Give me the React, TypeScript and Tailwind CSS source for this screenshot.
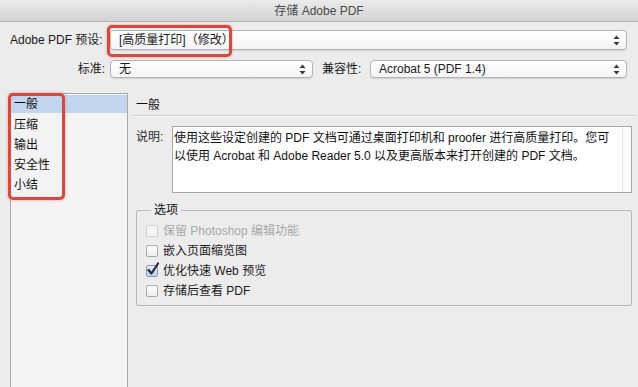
import React from "react";

const font = { fontFamily: '"Liberation Sans", "Noto Sans CJK SC", sans-serif' };

function Arrows() {
  return (
    <svg width="7" height="11" viewBox="0 0 7 11" className="shrink-0">
      <path d="M3.5 0.5 L6.5 4 L0.5 4 Z" fill="#3a3a3a" />
      <path d="M3.5 10.5 L6.5 7 L0.5 7 Z" fill="#3a3a3a" />
    </svg>
  );
}

function Select({ value, className }: { value: string; className: string }) {
  return (
    <div
      className={
        "flex items-center justify-between rounded-[4px] border border-[#b4b4b4] bg-gradient-to-b from-[#ffffff] to-[#f4f4f4] pl-[8px] pr-[6px] text-[12px] text-[#1b1b1b] shadow-[0_1px_1px_rgba(0,0,0,0.12)] " +
        className
      }
    >
      <span className="leading-none">{value}</span>
      <Arrows />
    </div>
  );
}

function Check({ label, checked, disabled }: { label: string; checked?: boolean; disabled?: boolean }) {
  return (
    <div className="flex h-[20px] items-center">
      <div
        className={
          "relative h-[12px] w-[12px] rounded-[2px] border " +
          (disabled
            ? "border-[#d0d0d0] bg-[#f6f6f6]"
            : checked
            ? "border-[#8b9bb5] bg-gradient-to-b from-[#e8f0fb] to-[#bcd0ea]"
            : "border-[#a8a8a8] bg-gradient-to-b from-[#ffffff] to-[#ececec]")
        }
      >
        {checked && (
          <svg width="14" height="14" viewBox="0 0 14 14" className="absolute left-[-1px] top-[-4px]">
            <path d="M2.5 8 L5.5 11.5 L12 1.5" fill="none" stroke="#1f2a44" strokeWidth="2.2" strokeLinecap="round" strokeLinejoin="round" />
          </svg>
        )}
      </div>
      <span className={"ml-[5px] text-[12px] " + (disabled ? "text-[#a8a8a8]" : "text-[#1b1b1b]")}>{label}</span>
    </div>
  );
}

export default function App() {
  return (
    <div className="relative h-[387px] w-[638px] overflow-hidden bg-[#ececec]" style={font}>
      {/* title bar */}
      <div className="flex h-[22px] items-center justify-center border-b border-[#b3b3b3] bg-gradient-to-b from-[#ebebeb] to-[#d3d3d3] text-[12px] text-[#4a4a4a]">
        存储 Adobe PDF
      </div>

      {/* form rows */}
      <div className="mt-[8px] flex h-[20px] items-center">
        <div className="w-[104px] pl-[10px] text-[12px] text-[#1b1b1b]">Adobe PDF 预设:</div>
        <Select value="[高质量打印]（修改）" className="ml-[6px] h-[20px] w-[517px]" />
      </div>
      <div className="mt-[10px] flex h-[18px] items-center">
        <div className="w-[105px] text-right text-[12px] text-[#1b1b1b]">标准:</div>
        <Select value="无" className="ml-[5px] h-[18px] w-[203px]" />
        <div className="ml-[9px] w-[48px] text-[12px] text-[#1b1b1b]">兼容性:</div>
        <Select value="Acrobat 5 (PDF 1.4)" className="ml-[0px] h-[18px] w-[257px]" />
      </div>

      {/* main */}
      <div className="mt-[15px] flex">
        {/* sidebar */}
        <div className="ml-[10px] h-[300px] w-[118px] border border-[#a9a9a9] bg-[#f3f3f3] pt-[1px]">
          <div className="flex h-[18px] items-center bg-[#c2d5ee] pl-[3px] text-[12px] text-[#111]">一般</div>
          <div className="mt-[2px]">
            {["压缩", "输出", "安全性", "小结"].map((s) => (
              <div key={s} className="flex h-[20px] items-center pl-[3px] text-[12px] text-[#111]">
                {s}
              </div>
            ))}
          </div>
        </div>

        {/* right panel */}
        <div className="ml-[5px] w-[503px]">
          <div className="flex h-[22px] items-center pl-[3px] pt-[2px] text-[12px] text-[#111]">一般</div>
          <div className="h-[2px] border-t border-[#cfcfcf] bg-[#f7f7f7]" />
          <div className="mt-[9px] flex">
            <div className="w-[39px] pl-[3px] pt-[2px] text-[12px] leading-[18px] text-[#2a2a2a]">说明:</div>
            <div className="relative h-[67px] w-[460px] border border-[#a6a6a6] bg-white pl-[1px] pr-[18px] pt-[2px] text-[12px] leading-[18px] text-[#111]">
              使用这些设定创建的 PDF 文档可通过桌面打印机和 proofer 进行高质量打印。您可以使用 Acrobat 和 Adobe Reader 5.0 以及更高版本来打开创建的 PDF 文档。
              <div className="absolute bottom-0 right-0 top-0 w-[9px] border-l border-[#e6e6e6] bg-[#fafafa]" />
            </div>
          </div>

          <div className="relative ml-[3px] mt-[17px] h-[96px] w-[496px] rounded-[2px] border border-[#b9b9b9] pl-[9px] pt-[10px]">
            <div className="absolute left-[14px] top-[-9px] bg-[#ececec] px-[3px] text-[12px] leading-[16px] text-[#111]">选项</div>
            <Check label="保留 Photoshop 编辑功能" disabled />
            <Check label="嵌入页面缩览图" />
            <Check label="优化快速 Web 预览" checked />
            <Check label="存储后查看 PDF" />
          </div>
        </div>
      </div>

      {/* red annotation boxes */}
      <div className="pointer-events-none absolute left-[107px] top-[25px] h-[32px] w-[125px] rounded-[5px] border-[3px] border-[#d8483c] shadow-[0_0_3px_rgba(216,72,60,0.5)]" />
      <div className="pointer-events-none absolute left-[8px] top-[93px] h-[107px] w-[57px] rounded-[5px] border-[3px] border-[#d8483c] shadow-[0_0_3px_rgba(216,72,60,0.5)]" />
    </div>
  );
}
